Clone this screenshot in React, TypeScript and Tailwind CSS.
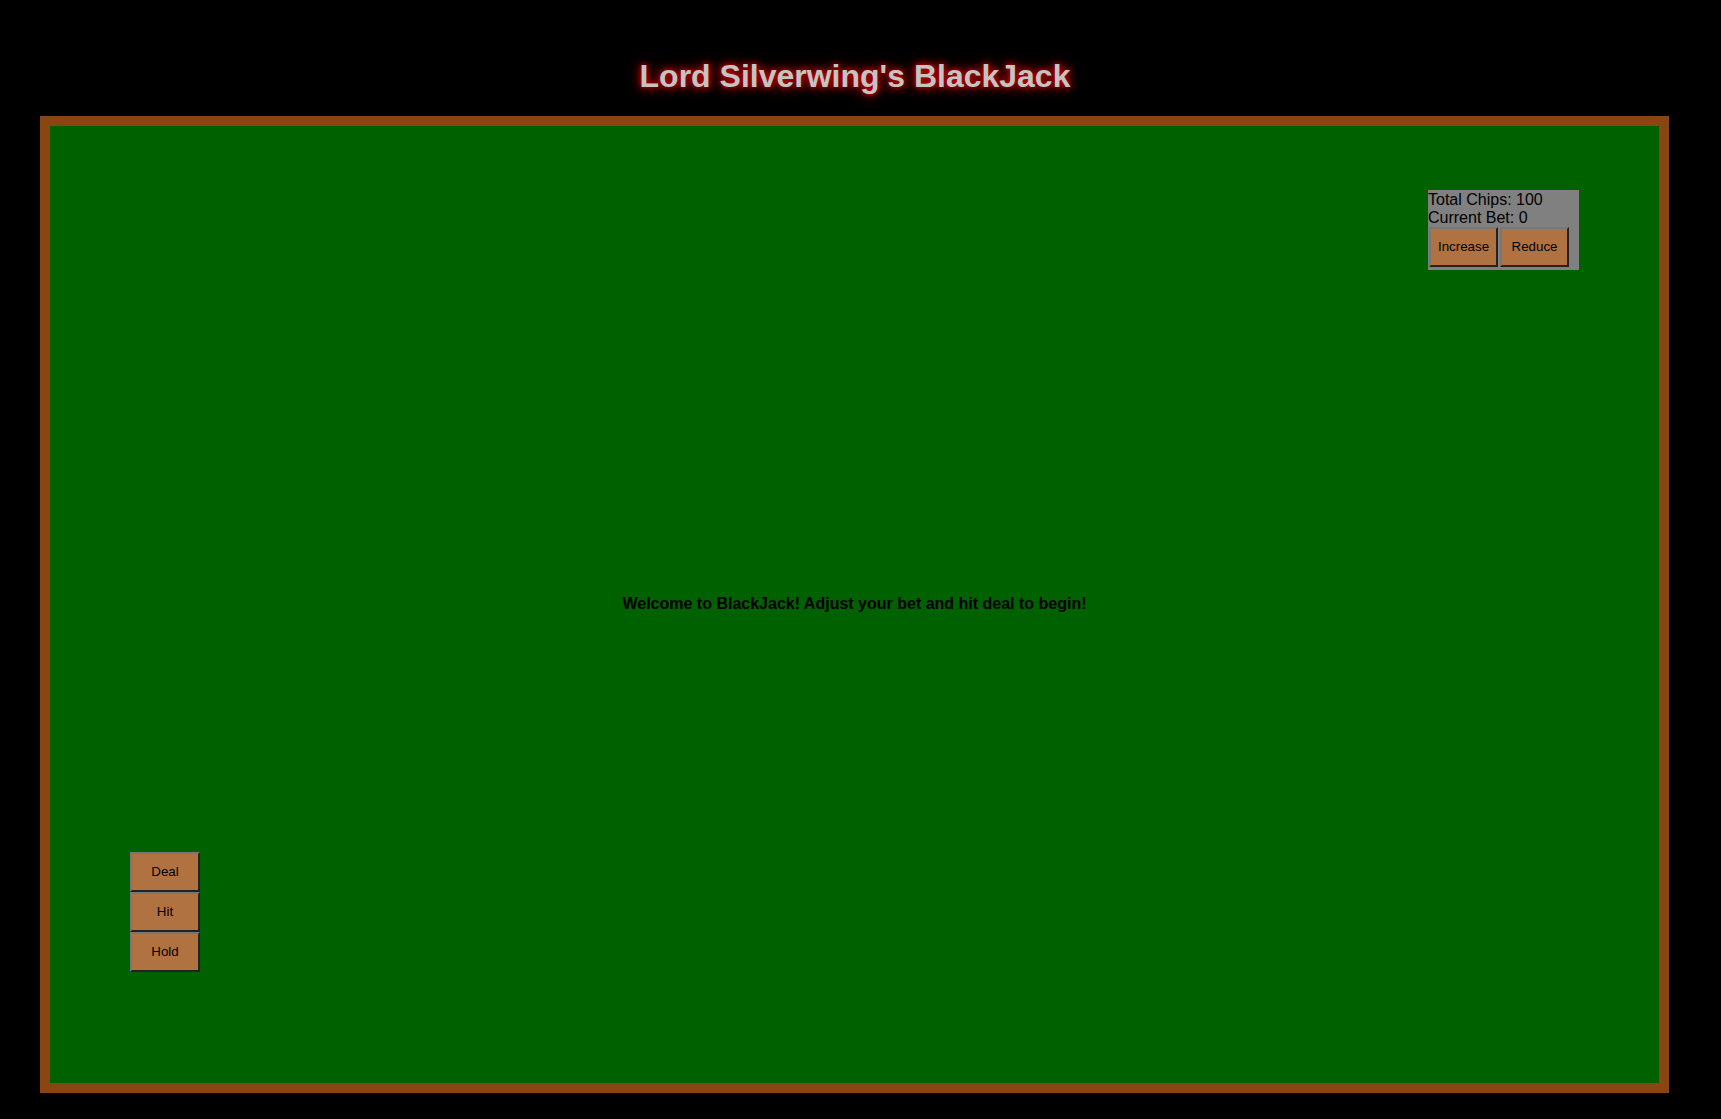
import React from "react";

const btn =
  "bg-[#b07241] text-black text-[13.33px] leading-none border-2 border-t-[#777777] border-l-[#777777] border-b-[#222222] border-r-[#222222] flex items-center justify-center";

export default function App() {
  return (
    <div
      className="w-[1721px] h-[1119px] bg-black overflow-hidden"
      style={{ fontFamily: '"Liberation Sans", Arial, sans-serif' }}
    >
      <h1 className="mt-[58px] mb-[21px] h-[37px] leading-[37px] text-[32px] font-bold text-center text-[#c4c4c4] pr-[11px] [text-shadow:0_0_5px_#d00000,0_0_10px_#b00000,0_0_16px_#800000]">
        Lord Silverwing's BlackJack
      </h1>
      <div className="ml-[40px] w-[1629px] h-[977px] border-[10px] border-[#8b4513] bg-[#006100] grid">
        <div className="col-start-1 row-start-1 self-start justify-self-end mt-[64px] mr-[80px] w-[151px] h-[80px] bg-[#808080] text-black text-[16px] leading-[18px] pt-[1px]">
          <div>Total Chips: 100</div>
          <div>Current Bet: 0</div>
          <div className="flex gap-[2px] pl-[1px]">
            <button className={`${btn} w-[69px] h-[40px]`}>Increase</button>
            <button className={`${btn} w-[69px] h-[40px]`}>Reduce</button>
          </div>
        </div>
        <div className="col-start-1 row-start-1 self-center justify-self-center text-[16px] font-bold text-black -mt-[1px]">
          Welcome to BlackJack! Adjust your bet and hit deal to begin!
        </div>
        <div className="col-start-1 row-start-1 self-end justify-self-start ml-[80px] mb-[111px] flex flex-col">
          <button className={`${btn} w-[70px] h-[40px]`}>Deal</button>
          <button className={`${btn} w-[70px] h-[40px]`}>Hit</button>
          <button className={`${btn} w-[70px] h-[40px]`}>Hold</button>
        </div>
      </div>
    </div>
  );
}
